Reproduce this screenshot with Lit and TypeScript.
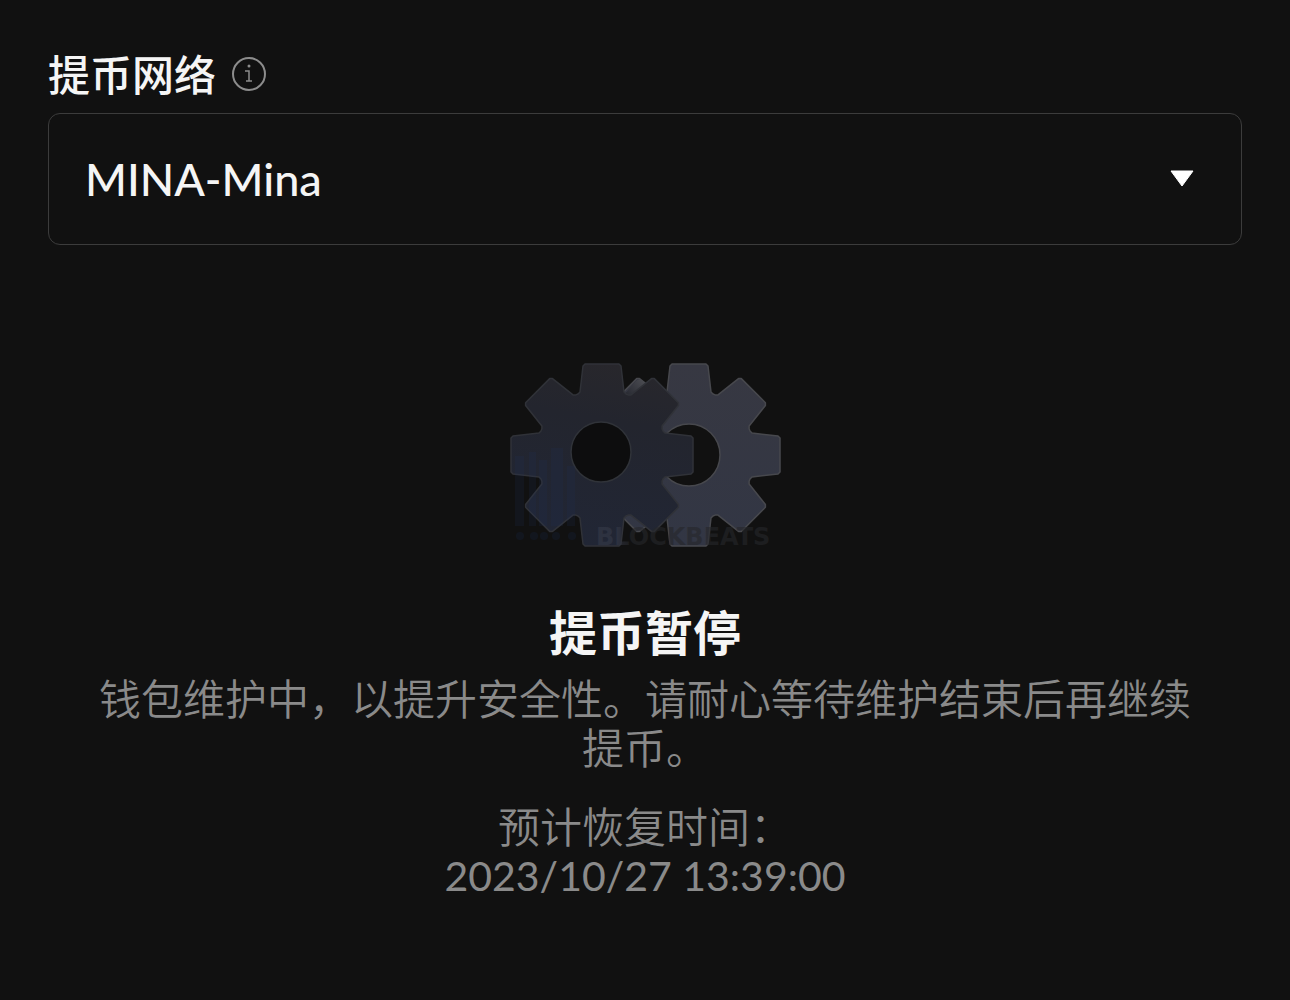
import { LitElement, html, css, svg } from "lit";
import { customElement, state } from "lit/decorators.js";

/** Outline of an eight-toothed gear centred on (cx, cy). */
function gearPath(cx: number, cy: number): string {
  const tooth = [[-24, -61], [-22, -63], [-19, -89], [-17, -91], [17, -91], [19, -89], [22, -63], [24, -61]];
  const points: string[] = [];
  for (let i = 0; i < 8; i++) {
    const a = (i * Math.PI) / 4;
    for (const [x, y] of tooth) {
      const px = cx + x * Math.cos(a) - y * Math.sin(a);
      const py = cy + x * Math.sin(a) + y * Math.cos(a);
      points.push(`${px.toFixed(1)} ${py.toFixed(1)}`);
    }
  }
  return `M${points.join("L")}Z`;
}

@customElement("maintenance-gears")
export class MaintenanceGears extends LitElement {
  static styles = css`
    :host { display: block; }
    .art { display: block; width: 280px; height: 200px; }
    .mark { font: 700 24px "DejaVu Sans", sans-serif; }
  `;

  render() {
    const bars = [[10, 102, 9], [24, 98, 7], [34, 106, 8], [46, 94, 12], [62, 112, 8]];
    return html`
      <svg class="art" viewBox="0 0 280 200" aria-hidden="true">
        <defs>
          <linearGradient id="front" gradientUnits="userSpaceOnUse" x1="100" y1="9" x2="70" y2="191">
            <stop offset="0" stop-color="#28272c" />
            <stop offset="0.3" stop-color="#23252e" />
            <stop offset="1" stop-color="#212635" />
          </linearGradient>
          <linearGradient id="back" x1="0" y1="0" x2="0" y2="1">
            <stop offset="0" stop-color="#373842" />
            <stop offset="1" stop-color="#323644" />
          </linearGradient>
          <linearGradient id="shine" gradientUnits="userSpaceOnUse" x1="120" y1="42" x2="138" y2="26">
            <stop offset="0" stop-color="#25272f" />
            <stop offset="1" stop-color="#4a4b51" />
          </linearGradient>
          <linearGradient id="ink" gradientUnits="userSpaceOnUse" x1="112" y1="0" x2="124" y2="0">
            <stop offset="0" stop-color="#363a48" />
            <stop offset="1" stop-color="#26272b" />
          </linearGradient>
        </defs>
        <path d="${gearPath(184, 101)}M215 101a31 31 0 1 0-62 0a31 31 0 1 0 62 0Z" fill="url(#back)" fill-rule="evenodd" stroke="#47484d" stroke-width="1.500" stroke-linejoin="round" />
        <path d="M118 42L131 27Q134 24 138 27L144 32V44Z" fill="url(#shine)" />
        <path d=${gearPath(97, 101)} fill="url(#front)" />
        <path d=${gearPath(97, 101)} fill="none" stroke="#303238" stroke-width="1.500" stroke-linejoin="round" />
        <circle cx="96" cy="98" r="30" fill="#0d0d0e" stroke="#303339" stroke-width="1.500" />
        ${bars.map(([x, y, w]) => svg`<rect x=${x} y=${y} width=${w} height=${172 - y} fill="#1d3260" opacity="0.16" /><circle cx=${x + 5} cy="182" r="4" fill="#1d3260" opacity="0.18" />`)}
        <text class="mark" x="91" y="191" fill="url(#ink)" opacity="0.6">BLOCKBEATS</text>
      </svg>
    `;
  }
}

@customElement("app-root")
export class AppRoot extends LitElement {
  @state() private network = "MINA-Mina";

  static styles = css`
    :host {
      display: block;
      box-sizing: border-box;
      min-height: 100vh;
      padding: 48px;
      background: #111111;
      color: #f5f5f5;
      font-family: "Lato", "Noto Sans CJK SC", sans-serif;
    }
    .heading { display: flex; align-items: center; gap: 15px; height: 50px; }
    .label { font-family: "Noto Sans CJK SC", sans-serif; font-size: 42px; font-weight: 500; line-height: 50px; }
    .info { display: flex; padding: 0; border: 0; background: none; color: #8c8c8c; }
    .info-icon { display: block; width: 36px; height: 36px; }
    .picker { position: relative; margin-top: 15px; }
    .select {
      display: block;
      width: 100%;
      height: 132px;
      padding: 0 84px 0 36px;
      border: 1px solid #3c3c3c;
      border-radius: 12px;
      appearance: none;
      background: transparent;
      color: inherit;
      font: 500 45px "Lato", "Noto Sans CJK SC", sans-serif;
    }
    .option { background: #111111; }
    .arrow { position: absolute; top: 56px; right: 47px; width: 26px; height: 18px; pointer-events: none; }
    .status { display: flex; flex-direction: column; align-items: center; padding-top: 109px; text-align: center; }
    .title { margin: 46px 0 0; font-family: "Noto Sans CJK SC", sans-serif; font-size: 48px; font-weight: 700; line-height: 60px; }
    .text { margin: 12px 0 0; color: #8a8a8a; font-family: "Noto Sans CJK SC", sans-serif; font-size: 42px; font-weight: 350; line-height: 49px; }
    .note { padding: 0 48px; }
    .time { margin-top: 30px; }
    .date { display: block; font-family: "Lato", sans-serif; font-size: 41px; font-weight: 400; line-height: 53px; }
  `;

  render() {
    return html`
      <div class="heading">
        <label class="label" for="network">提币网络</label>
        <button class="info" type="button" aria-label="提币网络">
          <svg class="info-icon" viewBox="0 0 36 36" fill="none" stroke="currentColor" stroke-width="2" aria-hidden="true">
            <circle cx="18" cy="19" r="16" />
            <path d="M14 16H18V26M15 26H21" stroke-width="1.500" />
            <circle cx="18" cy="11" r="1.500" fill="currentColor" stroke="none" />
          </svg>
        </button>
      </div>
      <div class="picker">
        <select class="select" id="network" @change=${(e: Event) => (this.network = (e.target as HTMLSelectElement).value)}>
          <option class="option" value="MINA-Mina" ?selected=${this.network === "MINA-Mina"}>MINA-Mina</option>
        </select>
        <svg class="arrow" viewBox="0 0 26 18" aria-hidden="true">
          <path d="M2 2H24L13 17Z" fill="#ffffff" stroke="#ffffff" stroke-linejoin="round" />
        </svg>
      </div>
      <section class="status">
        <maintenance-gears></maintenance-gears>
        <h1 class="title">提币暂停</h1>
        <p class="text note">钱包维护中，以提升安全性。请耐心等待维护结束后再继续提币。</p>
        <p class="text time">预计恢复时间：<time class="date" datetime="2023-10-27T13:39:00">2023/10/27 13:39:00</time></p>
      </section>
    `;
  }
}
